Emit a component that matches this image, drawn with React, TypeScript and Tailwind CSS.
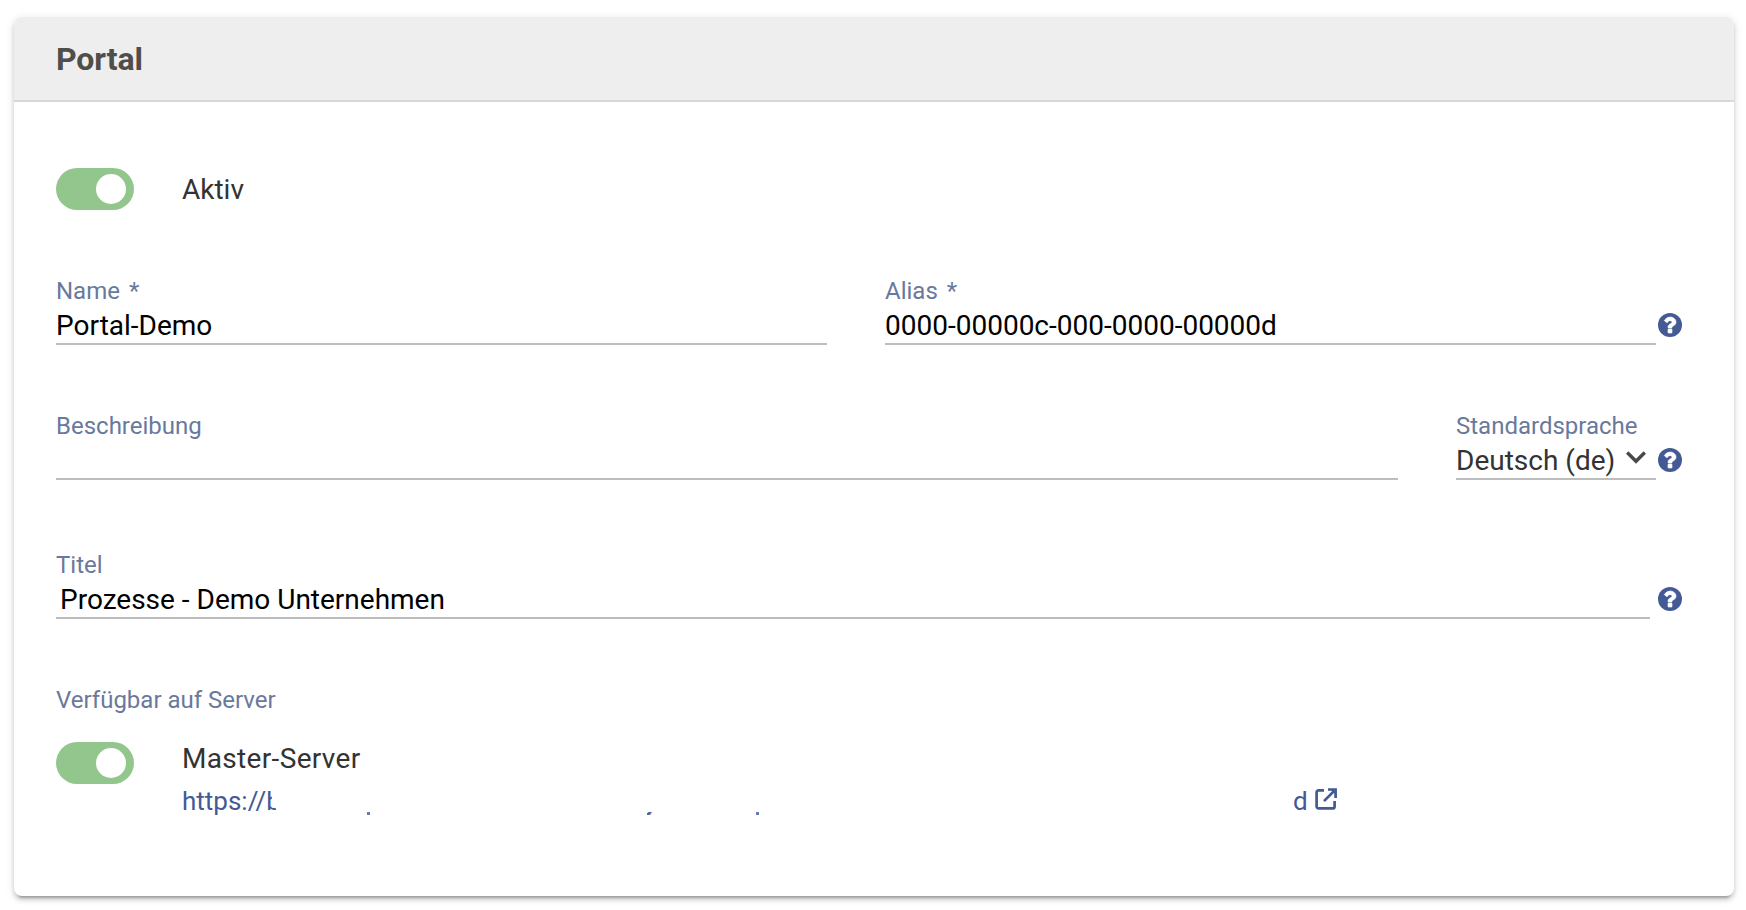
import { ReactNode } from "react";

function Toggle() {
  return (
    <button type="button" role="switch" aria-checked="true" className="flex h-[42px] w-[78px] shrink-0 justify-end rounded-full bg-[#92c68c] py-1.5 pr-2">
      <span className="size-[30px] rounded-full bg-white" />
    </button>
  );
}

function HelpIcon() {
  return (
    <svg viewBox="128 128 1536 1536" className="mb-2 size-6 shrink-0" fill="#445a95">
      <circle cx="896" cy="896" r="768" />
      <path
        fill="#fff"
        stroke="#fff"
        strokeWidth="40"
        d="M1024 1376v-192q0-14-9-23t-23-9h-192q-14 0-23 9t-9 23v192q0 14 9 23t23 9h192q14 0 23-9t9-23zm256-672q0-88-55.5-163t-138.5-116-170-41q-243 0-371 213-15 24 8 42l132 100q7 6 19 6 16 0 25-12 53-68 86-92 34-24 86-24 48 0 85.5 26t37.5 59q0 38-20 61t-68 45q-63 28-115.5 86.5t-52.5 125.5v36q0 14 9 23t23 9h192q14 0 23-9t9-23q0-19 21.5-49.5t54.5-49.5q32-18 49-28.5t46-35 44.5-48 28-60.5 12.5-81z"
      />
    </svg>
  );
}

function Field({ label, required, className, children }: { label: string; required?: boolean; className?: string; children?: ReactNode }) {
  return (
    <div className={className}>
      <div className="h-8 text-[24px] leading-8 text-[#69799c]">
        {label}
        {required && <span className="ml-[9px]">*</span>}
      </div>
      <div className="flex h-[38px] items-center border-b-2 border-[#bdbdbd] pt-0.5 text-[28px] leading-8 whitespace-pre text-black">{children}</div>
    </div>
  );
}

// hidden address: only the start, a few descender tips and the end stay visible
function MaskedLink() {
  return (
    <a href="#" className="flex h-8 items-end text-[26px] leading-8 text-[#445a95]">
      <span className="relative w-[93px] whitespace-nowrap">
        https://b
        <span className="absolute top-0 left-[90px] h-8 w-5 bg-white [clip-path:polygon(0_0,100%_0,100%_100%,20%_100%,20%_75%,0_55%)]" />
      </span>
      <span className="mb-0.5 ml-[92px] h-[3px] w-[3px] bg-[#6a7bab]" />
      <span className="mb-0.5 ml-[277px] h-[3px] w-[5px] bg-[#5468a0] [clip-path:polygon(30%_0,100%_0,60%_100%,0_100%,0_40%)]" />
      <span className="mb-0.5 ml-[104px] h-[3px] w-[3px] bg-[#6a7bab]" />
      <span className="ml-[534px]">d</span>
      <svg viewBox="0 0 22 22" className="mb-[7px] ml-[7px] size-[22px]" fill="none" stroke="currentColor" strokeWidth="2.7">
        <path d="M9 2.400H3.600A2 2 0 0 0 1.600 4.400V18.400A2 2 0 0 0 3.600 20.400H17.600A2 2 0 0 0 19.600 18.400V13" />
        <path d="M13 1.500H20.600V10M20.300 1.800L9 13.100" />
        <path d="M15 1H21V7Z" fill="currentColor" stroke="none" />
      </svg>
    </a>
  );
}

export default function App() {
  return (
    <div className="h-[910px] w-[1746px] overflow-hidden bg-white pt-[17px] pl-[14px] font-['Roboto',sans-serif] text-[#333]">
      <section className="h-[879px] w-[1720px] overflow-clip rounded-lg bg-white shadow-[0_6px_2px_-4px_rgba(0,0,0,0.2),0_4px_4px_0_rgba(0,0,0,0.14),0_2px_10px_0_rgba(0,0,0,0.12)]">
        <header className="flex h-[85px] items-center border-b-2 border-[#d8d8d8] bg-[#eee] pl-[42px]">
          <h2 className="text-[32px] leading-10 font-bold tracking-[-0.1px] text-[#4f4e4b]">Portal</h2>
        </header>

        <div className="px-[42px] pt-[66px]">
          <div className="flex items-center gap-12">
            <Toggle />
            <span className="pt-0.5 text-[28px] leading-8">Aktiv</span>
          </div>

          <div className="mt-[65px] flex items-end">
            <Field label="Name" required className="w-[771px]">Portal-Demo</Field>
            <Field label="Alias" required className="ml-[58px] mr-0.5 w-[771px]">0000-00000c-000-0000-00000d</Field>
            <HelpIcon />
          </div>

          <div className="mt-[65px] flex items-end">
            <Field label="Beschreibung" className="w-[1342px]" />
            <Field label="Standardsprache" className="ml-[58px] mr-0.5 w-[200px]">
              <span className="text-[#333]">Deutsch (de)</span>
              <svg viewBox="0 0 20 13" className="mb-2 ml-auto mr-[10px] h-[13px] w-5" fill="none" stroke="#4a4a4a" strokeWidth="3.4">
                <path d="M1.200 1.500L10 10.300L18.800 1.500" />
              </svg>
            </Field>
            <HelpIcon />
          </div>

          <div className="mt-[69px] flex items-end">
            <Field label="Titel" className="mr-2 w-[1594px]">
              <span className="ml-1">Prozesse - Demo Unternehmen</span>
            </Field>
            <HelpIcon />
          </div>

          <div className="mt-[65px] text-[24px] leading-8 text-[#69799c]">Verfügbar auf Server</div>
          <div className="mt-[26px] flex items-start gap-12">
            <Toggle />
            <div className="pt-px">
              <div className="text-[28px] leading-8 tracking-[0.33px]">Master-Server</div>
              <div className="mt-2.5"><MaskedLink /></div>
            </div>
          </div>
        </div>
      </section>
    </div>
  );
}
